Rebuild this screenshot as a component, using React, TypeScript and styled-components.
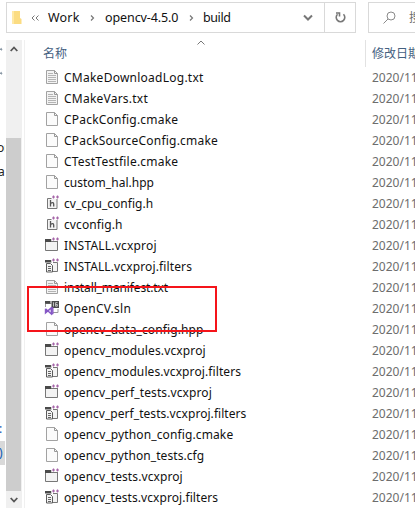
import React from "react";
import styled, { createGlobalStyle } from "styled-components";

const Global = createGlobalStyle`
  * { box-sizing: border-box; }
  html, body { margin: 0; background: #fff; overflow: hidden; }
  body { font: 12px/21px "Noto Sans", "Noto Sans CJK SC", sans-serif; color: #111; }
  svg { display: block; flex: none; }
`;

const Window = styled.div`
  width: 415px; height: 524px; overflow: hidden; background: #fff;
  display: flex; flex-direction: column;
`;
const TopBar = styled.header`
  height: 40px; flex: none; display: flex; gap: 12px; padding: 2px 0 7px 6px;
`;
const AddressBar = styled.div`
  width: 350px; height: 31px; border: 1px solid #d9d9d9; flex: none;
  display: flex; align-items: center; padding-left: 5px;
`;
const Crumbs = styled.nav`
  display: flex; align-items: center; flex: 1; font-size: 12.5px; white-space: nowrap; color: #111;
`;
const Crumb = styled.span<{ $w: number; $track?: number }>`
  width: ${p => p.$w}px; letter-spacing: ${p => p.$track ?? 0}px; line-height: 27px;
  padding-bottom: 1px;
`;
const CrumbGap = styled.span<{ $w: number }>`
  width: ${p => p.$w}px; flex: none; display: flex; justify-content: center; padding-top: 1px;
`;
const Refresh = styled.div`
  width: 31px; height: 29px; border-left: 1px solid #d9d9d9;
  display: flex; align-items: center; justify-content: center;
`;
const SearchBox = styled.div`
  width: 120px; flex: none; height: 31px; border: 1px solid #d9d9d9;
  display: flex; align-items: center; padding-left: 14px; gap: 13px; color: #6d6d6d;
`;
const Body = styled.div`
  display: flex; height: 468px; flex: none;
`;
const Tree = styled.aside`
  width: 6px; flex: none; overflow: hidden; display: flex; flex-direction: column;
`;
const TreeItem = styled.div<{ $selected?: boolean; $blue?: boolean; $shift?: number; $gap?: number }>`
  height: 24px; line-height: 24px; flex: none; width: 5px; overflow: hidden; white-space: nowrap;
  margin-top: ${p => p.$gap ?? 0}px; text-indent: ${p => p.$shift ?? 0}px;
  background: ${p => (p.$selected ? "#d9d9d9" : "transparent")};
  color: ${p => (p.$blue ? "#0a5cb8" : "#222")};
`;
const Pin = styled.div`
  height: 24px; padding-top: 7px; flex: none;
`;
const Scrollbar = styled.div`
  width: 16px; flex: none; background: #f0f0f0; display: flex; flex-direction: column;
  justify-content: space-between; height: 468px;
`;
const ScrollButton = styled.div`
  height: 17px; display: flex; align-items: center; justify-content: center;
`;
const Thumb = styled.div`
  height: 353px; width: 15px; background: #cdcdcd; margin-top: auto;
`;
const Content = styled.main`
  flex: 1; margin-left: 2px; border-left: 1px solid #f0f0f0; min-width: 0; position: relative;
`;
const Header = styled.div`
  height: 27px; display: flex; color: #44607f; line-height: 27px;
`;
const NameHead = styled.div`
  width: 341px; flex: none; padding-left: 18px; border-right: 1px solid #e2e2e2;
  display: flex;
`;
const SortMark = styled.span`
  margin-left: 130px;
`;
const DateHead = styled.div`
  padding-left: 6px; white-space: nowrap;
`;
const Row = styled.div`
  height: 21px; display: flex; align-items: center; white-space: nowrap; padding-left: 19px;
`;
const IconCell = styled.span`
  width: 20px; flex: none; align-self: flex-start; padding-top: 2px;
`;
const FileName = styled.span<{ $track: number }>`
  width: 308px; flex: none; letter-spacing: ${p => p.$track}px;
`;
const DateCell = styled.span`
  color: #6d6d6d;
`;
const Highlight = styled.div`
  position: absolute; left: 2px; top: 246px; width: 190px; height: 46px; border: 2px solid #f5141a;
`;

type Kind = "text" | "blank" | "header" | "project" | "filters" | "solution";

const Dots = () => (
  <>
    <path d="M7.500 0h8v4h-8z" fill="#fff" />
    <path d="M8 2h3M12 2h3M9.500.5v3M13.500.5v3" stroke="#a565a8" strokeWidth="1.200" />
  </>
);

const FileIcon = ({ kind }: { kind: Kind }) => (
  <svg width="16" height="16" viewBox="0 0 16 16" fill="none">
    {(kind === "text" || kind === "blank") && (
      <>
        <path d="M2.500 1.500h8l3 3v10h-11z" fill={kind === "text" ? "#f3f3f3" : "#fbfbfb"} stroke="#a2a2a2" />
        <path d="M10.500 1.500v3h3" stroke="#989898" />
        {kind === "text" && <path d="M4 4.500h5M4 6.500h8M4 8.500h8M4 10.500h8M4 12.500h8" stroke="#b4b4b4" />}
      </>
    )}
    {kind === "header" && (
      <>
        <path d="M3.500 3.500h9.500v10H3.500z" fill="#f3f3f3" stroke="#777" />
        <path d="M6.500 5v6.500M6.500 8.500q3-2 3.200.5v2.500" stroke="#555" strokeWidth="1.300" />
        <Dots />
      </>
    )}
    {kind === "project" && (
      <>
        <path d="M1.500 4.500h12v9h-12z" fill="#f3f3f3" stroke="#777" />
        <path d="M1 2h6.500v3H1z" fill="#4a4a4a" />
        <path d="M7 4.500h7" stroke="#777" />
        <Dots />
      </>
    )}
    {kind === "filters" && (
      <>
        <path d="M9 4.500h4.500v9H9" fill="#f3f3f3" stroke="#777" />
        <path d="M1 2h6.500v2.500H1z" fill="#4a4a4a" />
        <path d="M2.500 5.500h4l2 2v6.500h-6z" fill="#f3f3f3" stroke="#5c5c5c" />
        <path d="M4 8.500h3M4 10.500h3M4 12.500h3" stroke="#666" />
        <Dots />
      </>
    )}
    {kind === "solution" && (
      <>
        <path d="M1.500 7V3.500h6M9 12.500h5V9" stroke="#999" />
        <path d="M1 1h5.500v2.800H1zM7.500 1H15v7H7.500z" fill="#4a4a4a" />
        <path d="M9.500 2.300v4.200M13.600 2.600h-2v3.600h1.800V4.500h-1.800" stroke="#ddd" strokeWidth=".8" />
        <path d="M1.500 8.700v4.200l5.800-5v6l-5.800-5.200M7.500 7.500l1.300.6v5.400l-1.300.7" stroke="#8557c5" strokeWidth="1.400" />
      </>
    )}
  </svg>
);

const files: { name: string; kind: Kind; track: number }[] = [
  { name: "CMakeDownloadLog.txt", kind: "text", track: 0.25 },
  { name: "CMakeVars.txt", kind: "text", track: 0.23 },
  { name: "CPackConfig.cmake", kind: "blank", track: 0.21 },
  { name: "CPackSourceConfig.cmake", kind: "blank", track: 0.21 },
  { name: "CTestTestfile.cmake", kind: "blank", track: 0.22 },
  { name: "custom_hal.hpp", kind: "blank", track: 0.02 },
  { name: "cv_cpu_config.h", kind: "header", track: 0.03 },
  { name: "cvconfig.h", kind: "header", track: 0.1 },
  { name: "INSTALL.vcxproj", kind: "project", track: 0.2 },
  { name: "INSTALL.vcxproj.filters", kind: "filters", track: 0.13 },
  { name: "install_manifest.txt", kind: "text", track: -0.13 },
  { name: "OpenCV.sln", kind: "solution", track: 0.25 },
  { name: "opencv_data_config.hpp", kind: "blank", track: 0.12 },
  { name: "opencv_modules.vcxproj", kind: "project", track: 0.14 },
  { name: "opencv_modules.vcxproj.filters", kind: "filters", track: 0.1 },
  { name: "opencv_perf_tests.vcxproj", kind: "project", track: 0.1 },
  { name: "opencv_perf_tests.vcxproj.filters", kind: "filters", track: 0.05 },
  { name: "opencv_python_config.cmake", kind: "blank", track: 0.12 },
  { name: "opencv_python_tests.cfg", kind: "blank", track: 0.08 },
  { name: "opencv_tests.vcxproj", kind: "project", track: 0.1 },
  { name: "opencv_tests.vcxproj.filters", kind: "filters", track: 0.07 },
];

const Chevron = () => (
  <svg width="5" height="6" viewBox="0 0 5 6"><path d="M1 .5 3.500 3 1 5.500" fill="none" stroke="#777" strokeWidth="1.200" /></svg>
);

const PinTip = () => (
  <svg width="3" height="5" viewBox="0 0 3 5"><path d="M0 1.500h1V.5l1.500 2L1 4V3H0z" fill="#8a98a5" /></svg>
);

export default function App() {
  return (
    <>
      <Global />
      <Window>
        <TopBar>
          <AddressBar>
            <svg width="10" height="15" viewBox="0 0 10 15">
              <path d="M0 1h8v7l1.500 1v5H0z" fill="#fbdc82" />
              <path d="M0 1h2v13H0z" fill="#ffe9a6" />
            </svg>
            <Crumbs>
              <CrumbGap $w={26}>
                <svg width="9" height="6" viewBox="0 0 9 6"><path d="M3.500.5 1 3l2.500 2.500M7.500.5 5 3l2.500 2.500" fill="none" stroke="#777" /></svg>
              </CrumbGap>
              <Crumb $w={32} $track={0.2}>Work</Crumb>
              <CrumbGap $w={25}><Chevron /></CrumbGap>
              <Crumb $w={74} $track={-0.1}>opencv-4.5.0</Crumb>
              <CrumbGap $w={24}><Chevron /></CrumbGap>
              <Crumb $w={100} $track={-0.4}>build</Crumb>
              <svg width="10" height="7" viewBox="0 0 10 7"><path d="m1 1.500 4 4 4-4" fill="none" stroke="#777" strokeWidth="2" /></svg>
            </Crumbs>
            <Refresh>
              <svg width="13" height="13" viewBox="0 0 13 13"><path d="M9.500 3.300A4.300 4.300 0 1 1 3.500 3.300M2 2h3.500v3.500" fill="none" stroke="#777" strokeWidth="1.600" /></svg>
            </Refresh>
          </AddressBar>
          <SearchBox>
            <svg width="13" height="13" viewBox="0 0 13 13"><circle cx="8" cy="5" r="4" fill="none" stroke="#8a8a8a" /><path d="M5 8 .5 12.500" stroke="#8a8a8a" /></svg>
            搜索
          </SearchBox>
        </TopBar>
        <Body>
          <Tree>
            <Pin><PinTip /></Pin>
            <Pin><PinTip /></Pin>
            <TreeItem $gap={48} $shift={-3}>or</TreeItem>
            <TreeItem $shift={-2}>a</TreeItem>
            <TreeItem $blue $gap={233} $shift={-1}>:</TreeItem>
            <TreeItem $selected $blue $shift={-1}>)</TreeItem>
          </Tree>
          <Scrollbar>
            <ScrollButton>
              <svg width="8" height="6" viewBox="0 0 8 6"><path d="m.7 5 3.300-3.500L7.300 5" fill="none" stroke="#555" strokeWidth="1.800" /></svg>
            </ScrollButton>
            <Thumb />
            <ScrollButton>
              <svg width="8" height="6" viewBox="0 0 8 6"><path d="m.7 1 3.300 3.500L7.300 1" fill="none" stroke="#555" strokeWidth="1.800" /></svg>
            </ScrollButton>
          </Scrollbar>
          <Content>
            <Header>
              <NameHead>
                名称
                <SortMark>
                  <svg width="8" height="5" viewBox="0 0 8 5"><path d="m.5 4.500 3.500-3.500 3.500 3.500" fill="none" stroke="#777" /></svg>
                </SortMark>
              </NameHead>
              <DateHead>修改日期</DateHead>
            </Header>
            {files.map(f => (
              <Row key={f.name}>
                <IconCell><FileIcon kind={f.kind} /></IconCell>
                <FileName $track={f.track}>{f.name}</FileName>
                <DateCell>2020/11</DateCell>
              </Row>
            ))}
            <Highlight />
          </Content>
        </Body>
      </Window>
    </>
  );
}
